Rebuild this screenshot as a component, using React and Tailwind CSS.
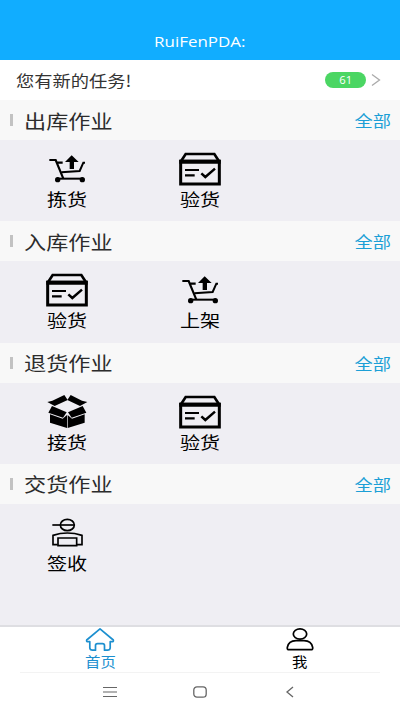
import React from "react";

function CartIcon() {
  return (
    <svg viewBox="0 0 126 102" className="w-[42px] h-[34px]" fill="none" stroke="black">
      <path d="M10 24H29L52 80M30 32H50" strokeWidth="6.5" />
      <path d="M46 61L101 57L112 32H117" strokeWidth="6" />
      <path d="M34 80H109" strokeWidth="6" />
      <circle cx="35" cy="83" r="8" fill="black" stroke="none" />
      <circle cx="109" cy="83" r="8" fill="black" stroke="none" />
      <path d="M77 10L98 30H84V51H71V30H57Z" fill="black" stroke="none" />
    </svg>
  );
}

function BoxIcon() {
  return (
    <svg viewBox="0 0 126 102" className="w-[42px] h-[34px]" fill="none" stroke="black">
      <path d="M5 29L20 6H106L121 29" strokeWidth="8" />
      <path d="M5 28H121V96H5Z" strokeWidth="9" />
      <path d="M1 29H125" strokeWidth="12" />
      <path d="M18 54H60M18 70H47" strokeWidth="6.5" />
      <path d="M67 64L79 75L108 50" strokeWidth="7.5" />
    </svg>
  );
}

function OpenBoxIcon() {
  return (
    <svg viewBox="0 0 126 102" className="w-[42px] h-[34px]" fill="black">
      <path d="M19 17L55 0L65 15L26 33L4 21Z" />
      <path d="M108 17L74 0L64 15L102 33L124 21Z" />
      <path d="M18 33L62 52L51 68L7 53Z" />
      <path d="M110 33L66 52L77 68L121 53Z" />
      <path d="M12 58L50 71L63 60V99L12 83Z" />
      <path d="M116 58L78 71L65 60V99L116 83Z" />
    </svg>
  );
}

function SignIcon() {
  return (
    <svg viewBox="0 0 126 102" className="w-[42px] h-[34px]" fill="none" stroke="black" strokeWidth="5">
      <ellipse cx="64" cy="27" rx="21" ry="17" />
      <path d="M19 27H85" />
      <path d="M35 86H21V58Q64 44 108 58V86H92" />
      <path d="M36 66H92V89H36Z" />
    </svg>
  );
}

const sections = [
  { title: "出库作业", items: [{ label: "拣货", icon: CartIcon }, { label: "验货", icon: BoxIcon }] },
  { title: "入库作业", items: [{ label: "验货", icon: BoxIcon }, { label: "上架", icon: CartIcon }] },
  { title: "退货作业", items: [{ label: "接货", icon: OpenBoxIcon }, { label: "验货", icon: BoxIcon }] },
  { title: "交货作业", items: [{ label: "签收", icon: SignIcon }] },
];

function Section({ title, items }) {
  return (
    <div className="h-[121.3px] flex flex-col">
      <div className="h-10 shrink-0 flex items-center bg-[#f8f8f8] pl-[10px] pr-[9px]">
        <div className="w-[3px] h-3 bg-[#c2c2c2]" />
        <h2 className="ml-[11px] mt-px text-[19px] leading-6 text-[#2c2c2c] origin-left scale-x-[1.165]">
          {title}
        </h2>
        <a className="ml-auto text-[16px] leading-6 text-[#1c9fd6] origin-right scale-x-[1.14]">
          全部
        </a>
      </div>
      <div className="flex-1 grid grid-cols-3 bg-[#efeef3] pt-3">
        {items.map(({ label, icon: Icon }) => (
          <div key={label} className="flex flex-col items-center">
            <Icon />
            <span className="mt-[2px] text-[17px] leading-[22px] text-black scale-x-[1.18]">
              {label}
            </span>
          </div>
        ))}
      </div>
    </div>
  );
}

function App() {
  return (
    <div className="w-[400px] h-[711px] flex flex-col overflow-hidden bg-white font-['Noto_Sans_CJK_SC',sans-serif]">
      <header className="h-[60px] shrink-0 bg-[#11adff] flex items-end justify-center pb-[9px]">
        <h1 className="font-['Open_Sans',sans-serif] text-[14px] leading-[18px] text-white scale-x-[1.21]">
          RuiFenPDA:
        </h1>
      </header>

      <div className="h-10 shrink-0 flex items-center pl-4 pr-[19px]">
        <p className="-mt-px text-[16px] leading-6 text-[#333] origin-left scale-x-[1.14]">
          您有新的任务!
        </p>
        <span className="ml-auto w-[41px] h-4 rounded-full bg-[#4bd663] flex items-center justify-center">
          <span className="font-['Open_Sans',sans-serif] text-[10px] leading-4 text-white scale-x-[1.12]">
            61
          </span>
        </span>
        <svg viewBox="0 0 10 14" className="ml-[5px] w-[10px] h-[14px]" fill="none" stroke="#aaa" strokeWidth="1.3">
          <path d="M1 1.5L8.5 7L1 12.5" />
        </svg>
      </div>

      <main className="h-[525px] shrink-0 overflow-hidden bg-[#efeef3]">
        {sections.map((section) => (
          <Section key={section.title} {...section} />
        ))}
      </main>

      <nav className="h-[47px] shrink-0 grid grid-cols-2 border-t-2 border-[#dedee2]">
        <div className="flex flex-col items-center text-[#1c8fcf]">
          <svg viewBox="0 0 30 25" className="w-[30px] h-[25px]" fill="none" stroke="currentColor" strokeWidth="1.7" strokeLinejoin="round">
            <path d="M15 1.8L28.3 13Q29 15 26.5 14.7H25.2V21Q25 23.2 22.5 23.2H19.5V18.5Q19.5 16.7 17.5 16.7H12.5Q10.5 16.7 10.5 18.5V23.2H7.5Q5 23.2 4.8 21V14.7H3.5Q1 15 1.7 13Z" />
          </svg>
          <span className="-mt-px text-[13.5px] leading-5 scale-x-[1.14]">首页</span>
        </div>
        <div className="flex flex-col items-center text-black">
          <svg viewBox="0 0 28 25" className="w-[28px] h-[25px]" fill="none" stroke="currentColor" strokeWidth="1.7" strokeLinejoin="round">
            <ellipse cx="14" cy="7" rx="6.7" ry="5.2" />
            <path d="M3 22.7Q1 22.7 1.3 20.5Q2.5 13.7 10 13.7H18Q25.5 13.7 26.7 20.5Q27 22.7 25 22.7Z" />
          </svg>
          <span className="-mt-px text-[13.5px] leading-5 scale-x-[1.14]">我</span>
        </div>
      </nav>

      <footer className="flex-1 mx-5 border-t border-[#f3f3f3] flex justify-center gap-[76px] pt-3 pb-[13px] items-center">
        <svg viewBox="0 0 14 12" className="w-[14px] h-3" stroke="#666" strokeWidth="1.2">
          <path d="M0 1.5H14M0 6H14M0 10.5H14" />
        </svg>
        <svg viewBox="0 0 14 12" className="w-[14px] h-3" fill="none" stroke="#666" strokeWidth="1.3">
          <rect x="0.8" y="0.8" width="12.4" height="10.4" rx="3.2" />
        </svg>
        <svg viewBox="0 0 14 12" className="w-[14px] h-3" fill="none" stroke="#666" strokeWidth="1.3">
          <path d="M10 1L4 6L10 11" />
        </svg>
      </footer>
    </div>
  );
}

export default App;
